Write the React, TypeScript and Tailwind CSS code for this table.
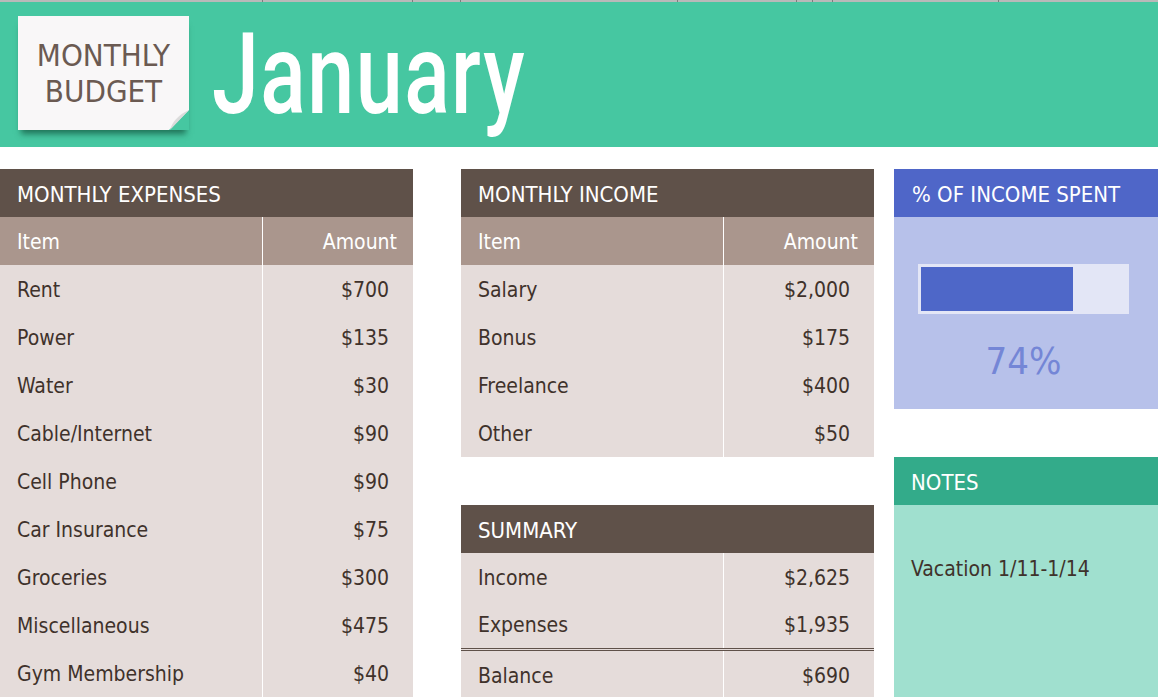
import React from 'react';

const expenses = [
  ['Rent', '$700'],
  ['Power', '$135'],
  ['Water', '$30'],
  ['Cable/Internet', '$90'],
  ['Cell Phone', '$90'],
  ['Car Insurance', '$75'],
  ['Groceries', '$300'],
  ['Miscellaneous', '$475'],
  ['Gym Membership', '$40']
];

const income = [
  ['Salary', '$2,000'],
  ['Bonus', '$175'],
  ['Freelance', '$400'],
  ['Other', '$50']
];

const ticks = [263, 150, 48, 217, 119, 16, 20, 166];

function SectionHeader({ title }: { title: string }) {
  return <div className="h-[48px] bg-[#5f5149] text-white text-[22px] flex items-center pt-[3px] pl-[17px]">{title}</div>;
}

function ColumnHeads() {
  return <div className="h-[48px] bg-[#aa968d] text-white flex">
      <div className="w-[263px] border-r border-white flex items-center pt-[3px] pl-[17px]">Item</div>
      <div className="flex-1 flex items-center justify-end pt-[3px] pr-[16px]">Amount</div>
    </div>;
}

function Row({ label, value, className = '' }: { label: string; value: string; className?: string }) {
  return <div className={`h-[48px] bg-[#e5dcda] text-[#3f322b] flex ${className}`}>
      <div className="w-[263px] border-r border-white flex items-center pt-[3px] pl-[17px]">{label}</div>
      <div className="flex-1 flex items-center justify-end pt-[3px] pr-[24px]">{value}</div>
    </div>;
}

export default function App() {
  return <div className="w-[1158px] h-[697px] overflow-hidden bg-white font-['DejaVu_Sans_Condensed','DejaVu_Sans',sans-serif] text-[21px]">
      {/* grid column ticks */}
      <div className="h-[2px] bg-[#b9b9b9] flex">
        {ticks.map((w, i) => <div key={i} className="h-full border-r border-[#7d7d7d]" style={{ width: w }} />)}
      </div>

      {/* banner */}
      <div className="h-[145px] bg-[#46c7a1] flex items-start">
        <div className="relative mt-[14px] ml-[18px] w-[171px] h-[114px] bg-[#f9f7f8] shadow-[0_7px_6px_-3px_rgba(20,90,65,0.75)] flex flex-col items-center justify-center text-[#6b5a52] text-[31px] leading-[36px]">
          <span>MONTHLY</span>
          <span>BUDGET</span>
          <svg className="absolute right-0 bottom-0 w-[20px] h-[20px]" viewBox="0 0 20 20">
            <defs>
              <linearGradient id="fold" x1="0" y1="0" x2="1" y2="1">
                <stop offset="0" stopColor="#eeeeee" />
                <stop offset="1" stopColor="#c4c4c4" />
              </linearGradient>
            </defs>
            <path d="M20 0 L20 20 L0 20 Z" fill="#46c7a1" />
            <path d="M20 0 L1 20 C3 12 9 5 20 0 Z" fill="url(#fold)" />
          </svg>
        </div>
        <div className="ml-[23px] mt-[15px] font-['Roboto',sans-serif] font-medium text-white text-[114px] leading-none scale-x-[0.74] origin-left tracking-[2px]">
          January
        </div>
      </div>

      <div className="mt-[22px] flex">
        {/* expenses */}
        <div className="w-[413px] shrink-0">
          <SectionHeader title="MONTHLY EXPENSES" />
          <ColumnHeads />
          {expenses.map(([l, v]) => <Row key={l} label={l} value={v} />)}
        </div>

        <div className="w-[48px] shrink-0" />

        {/* income + summary */}
        <div className="w-[413px] shrink-0">
          <SectionHeader title="MONTHLY INCOME" />
          <ColumnHeads />
          {income.map(([l, v]) => <Row key={l} label={l} value={v} />)}
          <div className="h-[48px]" />
          <SectionHeader title="SUMMARY" />
          <Row label="Income" value="$2,625" />
          <Row label="Expenses" value="$1,935" className="h-[50px] border-b-[3px] border-double border-[#5f5149]" />
          <Row label="Balance" value="$690" className="h-[46px]" />
        </div>

        <div className="w-[20px] shrink-0" />

        {/* right side */}
        <div className="flex-1">
          <div className="h-[48px] bg-[#4f66c8] text-white text-[22px] flex items-center pt-[3px] pl-[18px]">% OF INCOME SPENT</div>
          <div className="h-[192px] bg-[#b7c1ea] pt-[47px] pl-[24px]">
            <div className="w-[211px]">
              <div className="h-[50px] bg-[#e3e6f6] p-[3px]">
                <div className="h-full w-[74%] bg-[#4e67c8]" />
              </div>
              <div className="mt-[25px] text-center text-[38px] leading-[44px] text-[#7486d6]">74%</div>
            </div>
          </div>
          <div className="h-[48px]" />
          <div className="h-[48px] bg-[#33ab8a] text-white text-[22px] flex items-center pt-[3px] pl-[17px]">NOTES</div>
          <div className="h-[192px] bg-[#a0e0cf] pt-[41px] pl-[17px] text-[#3f322b]">
            <div className="h-[48px] flex items-center">Vacation 1/11-1/14</div>
          </div>
        </div>
      </div>
    </div>;
}
